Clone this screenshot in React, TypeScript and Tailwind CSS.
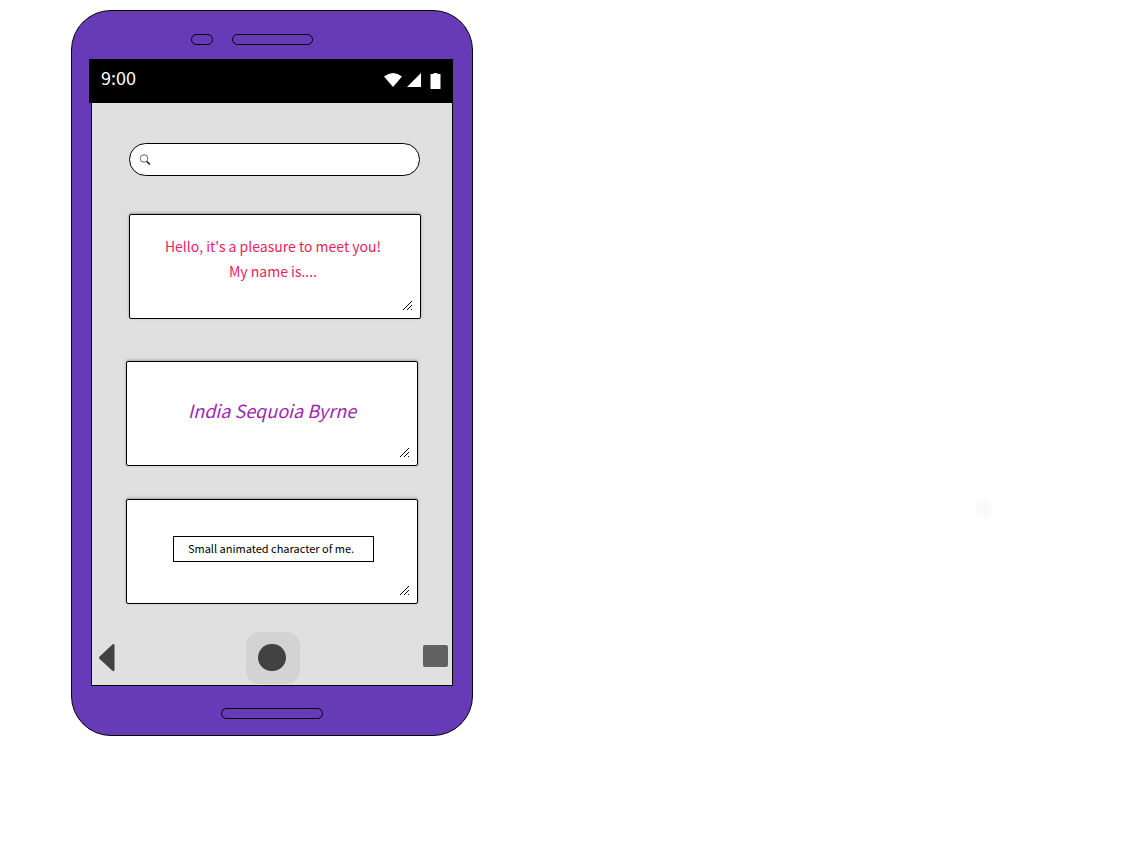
import type { ReactNode } from "react";

function Card({ children, className = "" }: { children: ReactNode; className?: string }) {
  return (
    <div
      className={`relative flex h-[105px] flex-col items-center rounded-xs border border-black bg-white shadow-[0_-1px_3px_rgba(0,0,0,0.3)] ${className}`}
    >
      {children}
      <svg
        className="pointer-events-none absolute right-2 bottom-2 size-[9px]"
        viewBox="0 0 9 9"
        fill="black"
        shapeRendering="crispEdges"
        aria-hidden="true"
      >
        <path d="M8 0h1v1H8zM7 1h1v1H7zM6 2h1v1H6zM5 3h1v1H5zM4 4h1v1H4zM3 5h1v1H3zM2 6h1v1H2zM1 7h1v1H1zM0 8h1v1H0zM8 4h1v1H8zM7 5h1v1H7zM6 6h1v1H6zM5 7h1v1H5zM4 8h1v1H4zM8 8h1v1H8z" />
      </svg>
    </div>
  );
}

function StatusBar() {
  return (
    <header className="mr-[19px] ml-[17px] flex h-11 items-start justify-between bg-black pr-3 pl-3 text-white">
      <time className="pt-[5px] text-[18px] leading-[26px]">9:00</time>
      <svg className="mt-[13px] h-[18px] w-[58px]" viewBox="0 0 58 18" fill="white" aria-hidden="true">
        <path d="M1 4.5Q10-2.5 19 4.5L10 15Z" />
        <path d="M24 15 38 1V15Z" />
        <path d="M47.5 2h3V1h4v1h3v15h-10Z" />
      </svg>
    </header>
  );
}

function NavBar() {
  return (
    <nav className="mt-7 flex h-[53px] items-start justify-between pr-1 pl-[7px]">
      <button type="button" aria-label="Back" className="mt-3">
        <svg className="h-7 w-4" viewBox="0 0 16 28" fill="#424242" aria-hidden="true">
          <path d="M0.4 12.8 13.4 0.5Q15.5-.7 15.5 1.5V25.5Q15.5 28 13.4 26.8L.4 14.8Q-.4 13.8.4 12.8Z" />
        </svg>
      </button>
      <button
        type="button"
        aria-label="Home"
        className="ml-[7px] flex h-[52px] w-[54px] items-start rounded-[14px] bg-[#d3d3d3] pt-3 pl-3"
      >
        <span className="h-[27px] w-7 rounded-full bg-[#424242]" />
      </button>
      <button type="button" aria-label="Recent apps" className="mt-[13px] h-[22px] w-[25px] rounded-xs bg-[#616161]" />
    </nav>
  );
}

export default function App() {
  return (
    <main
      className="flex min-h-screen items-start justify-between bg-white pt-[10px] pr-[138px] pb-10 pl-[71px] font-['Noto_Sans_CJK_SC',sans-serif]"
    >
      <section className="w-full max-w-[402px] rounded-[40px] border border-black bg-[#673ab7]">
        <div className="flex h-12 items-center justify-start gap-[19px] pl-[119px]">
          <span className="mt-[9px] h-[11px] w-[22px] rounded-full border border-black" />
          <span className="mt-[9px] h-[11px] w-[81px] rounded-full border border-black" />
        </div>
        <StatusBar />
        <div className="mx-[19px] border border-t-0 border-black bg-[#e0e0e0] pt-10">
          <label className="mr-8 ml-[37px] flex h-[33px] items-center rounded-full border border-black bg-white pl-[10px]">
            <svg className="size-3 shrink-0" viewBox="0 0 12 12" fill="none" stroke="black" aria-hidden="true">
              <circle cx="4" cy="4.5" r="3.8" strokeWidth="0.6" />
              <path d="m6.8 7.5 3 3" strokeWidth="1.2" />
            </svg>
            <input type="search" aria-label="Search" className="h-full min-w-0 flex-1 bg-transparent px-2 text-sm outline-none" />
          </label>
          <Card className="mt-[38px] mr-[31px] ml-[37px]">
            <textarea
              aria-label="Greeting"
              defaultValue={"Hello, it's a pleasure to meet you!\nMy name is...."}
              className="block h-full w-full resize-none overflow-hidden bg-transparent pt-[19px] pr-1 text-center text-[14px] leading-[25px] text-[#e91e63] outline-none"
            />
          </Card>
          <Card className="mt-[42px] mr-[34px] ml-[34px]">
            <textarea
              aria-label="Name"
              defaultValue="India Sequoia Byrne"
              className="block h-full w-full resize-none overflow-hidden bg-transparent pt-[33px] text-center text-[18px] leading-[30px] text-[#9c27b0] italic outline-none"
            />
          </Card>
          <Card className="mt-[33px] mr-[34px] ml-[34px]">
            <input
              type="text"
              aria-label="Character"
              defaultValue="Small animated character of me."
              className="mt-9 ml-[2px] h-[26px] w-[201px] border border-black bg-white pr-1 pb-[2px] text-center text-[11px] text-black outline-none"
            />
          </Card>
          <NavBar />
        </div>
        <div className="flex h-[49px] justify-center pt-[22px]">
          <span className="h-[11px] w-[102px] rounded-full border border-black" />
        </div>
      </section>
      <span className="mt-[491px] size-[17px] shrink-0 rounded-full bg-[#fafafa]" />
    </main>
  );
}
